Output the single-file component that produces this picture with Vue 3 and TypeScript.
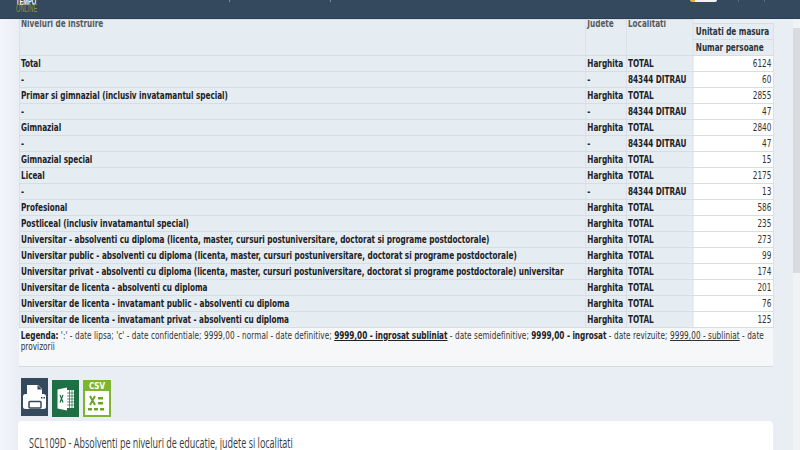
<script setup lang="ts">
interface Row { a: string; b: string; c: string; v: string }
const H = 'Harghita'
const T = 'TOTAL'
const D = '84344 DITRAU'
const rows: Row[] = [
  { a: 'Total', b: H, c: T, v: '6124' },
  { a: '-', b: '-', c: D, v: '60' },
  { a: 'Primar si gimnazial (inclusiv invatamantul special)', b: H, c: T, v: '2855' },
  { a: '-', b: '-', c: D, v: '47' },
  { a: 'Gimnazial', b: H, c: T, v: '2840' },
  { a: '-', b: '-', c: D, v: '47' },
  { a: 'Gimnazial special', b: H, c: T, v: '15' },
  { a: 'Liceal', b: H, c: T, v: '2175' },
  { a: '-', b: '-', c: D, v: '13' },
  { a: 'Profesional', b: H, c: T, v: '586' },
  { a: 'Postliceal (inclusiv invatamantul special)', b: H, c: T, v: '235' },
  { a: 'Universitar - absolventi cu diploma (licenta, master, cursuri postuniversitare, doctorat si programe postdoctorale)', b: H, c: T, v: '273' },
  { a: 'Universitar public - absolventi cu diploma (licenta, master, cursuri postuniversitare, doctorat si programe postdoctorale)', b: H, c: T, v: '99' },
  { a: 'Universitar privat - absolventi cu diploma (licenta, master, cursuri postuniversitare, doctorat si programe postdoctorale) universitar', b: H, c: T, v: '174' },
  { a: 'Universitar de licenta - absolventi cu diploma', b: H, c: T, v: '201' },
  { a: 'Universitar de licenta - invatamant public - absolventi cu diploma', b: H, c: T, v: '76' },
  { a: 'Universitar de licenta - invatamant privat - absolventi cu diploma', b: H, c: T, v: '125' },
]
</script>

<template>
  <div class="page">
    <header class="topbar">
      <div class="logo"><span class="l1">TEMPO</span><span class="l2">ONLINE</span></div>
      <span class="tick t1"></span>
      <span class="tick t2"></span>
      <span class="pill"></span>
      <span class="tick t3"></span>
      <span class="tick t4"></span>
    </header>
    <main class="content">
      <div class="sheet">
        <table class="data">
          <colgroup>
            <col class="c1" /><col class="c2" /><col class="c3" /><col class="c4" />
          </colgroup>
          <thead>
            <tr class="gap">
              <th rowspan="3" class="top">Niveluri de instruire</th>
              <th rowspan="3" class="top">Judete</th>
              <th rowspan="3" class="top">Localitati</th>
              <td class="blank"></td>
            </tr>
            <tr><th class="um">Unitati de masura</th></tr>
            <tr><th class="um">Numar persoane</th></tr>
          </thead>
          <tbody>
            <tr v-for="(r, i) in rows" :key="i">
              <th>{{ r.a }}</th>
              <th>{{ r.b }}</th>
              <th>{{ r.c }}</th>
              <td>{{ r.v }}</td>
            </tr>
          </tbody>
        </table>
        <p class="legend">
          <b>Legenda:</b> ':' - date lipsa; 'c' - date confidentiale; 9999,00 - normal - date definitive;
          <b><u>9999,00 - ingrosat subliniat</u></b> - date semidefinitive; <b>9999,00 - ingrosat</b> - date revizuite;
          <u>9999,00 - subliniat</u> - date provizorii
        </p>
      </div>
      <div class="tools">
        <svg class="ic print" width="27" height="38" viewBox="0 0 27 38">
          <rect width="27" height="38" fill="#34495e" />
          <path d="M6 7h11l4 4v6H6z" fill="#fff" />
          <path d="M16.500 7v4.500H21z" fill="#34495e" />
          <path d="M4.500 16h18a2.500 2.500 0 0 1 2.500 2.500v10a2.500 2.500 0 0 1-2.500 2.500h-18A2.500 2.500 0 0 1 2 28.500v-10A2.500 2.500 0 0 1 4.500 16z" fill="#fff" />
          <rect x="8" y="23.500" width="12" height="6.500" rx="1" fill="#fff" stroke="#34495e" stroke-width="1.500" />
          <rect x="20" y="19" width="1.500" height="1.500" fill="#34495e" />
          <rect x="22.500" y="19" width="1.500" height="1.500" fill="#34495e" />
        </svg>
        <svg class="ic" width="27" height="37" viewBox="0 0 27 37">
          <rect width="27" height="37" fill="#1e6f43" />
          <path d="M5.500 9.500L15 7.500v23l-9.500-2z" fill="#fff" />
          <rect x="15" y="10" width="7" height="18" fill="#fff" />
          <path d="M17.500 10v18M20 10v18M15 13h7M15 16h7M15 19h7M15 22h7M15 25h7" stroke="#1e6f43" stroke-width=".7" />
          <path d="M8 15l3 7.500M11 15l-3 7.500" stroke="#1e6f43" stroke-width="1.200" />
        </svg>
        <svg class="ic" width="28" height="37" viewBox="0 0 28 37">
          <rect width="28" height="37" fill="#7eb52f" />
          <rect x="2" y="11" width="24" height="24" fill="#fff" />
          <text x="14" y="8.500" class="csv">CSV</text>
          <path d="M7 16l5 9M12 16l-5 9" stroke="#6aa624" stroke-width="2" />
          <path d="M15 17h5v2.500h-5zM15 22h5v2.500h-5zM5 28h4v2.500H5zM11 28h4v2.500h-4zM17 28h4v2.500h-4z" fill="#6aa624" />
        </svg>
      </div>
      <section class="card">
        <h2>SCL109D - Absolventi pe niveluri de educatie, judete si localitati</h2>
      </section>
    </main>
    <div class="scroll"><div class="thumb"></div></div>
  </div>
</template>

<style>
html, body { margin: 0; height: 100%; overflow: hidden; }
</style>

<style scoped>
.page {
  position: relative;
  width: 800px;
  height: 450px;
  overflow: hidden;
  background: linear-gradient(90deg, #f2f5f9 0, #e9edf4 22px);
  font-family: "DejaVu Sans Condensed", "DejaVu Sans", sans-serif;
  color: #212529;
}
.topbar {
  position: relative;
  height: 19px;
  background: #34495e;
  border-bottom: 1px solid #2c3f52;
  box-sizing: border-box;
  overflow: hidden;
}
.logo {
  position: absolute;
  left: 16px;
  top: -1px;
  display: flex;
  flex-direction: column;
  font-family: "Liberation Sans", sans-serif;
  transform: scaleX(.57);
  transform-origin: 0 0;
}
.l1 { color: #fff; font-size: 10px; line-height: 5px; font-weight: 700; }
.l2 { color: #8b8f3c; font-size: 10px; line-height: 10px; }
.tick { position: absolute; top: 0; width: 1px; height: 2px; background: #7f8e9e; }
.t1 { left: 229px; }
.t2 { left: 330px; }
.t3 { left: 738px; background: #5c6f82; }
.t4 { left: 764px; background: #5c6f82; }
.pill {
  position: absolute;
  top: 0;
  left: 690px;
  width: 27px;
  height: 2px;
  box-sizing: border-box;
  border-radius: 0 0 3px 3px;
  background: #f2f2f2;
  border-left: 5px solid #e0b53a;
}
.content { padding: 0 27px 0 19px; }
.sheet {
  width: 928px;
  transform: scaleX(.8125);
  transform-origin: 0 0;
}
.data {
  width: 928px;
  table-layout: fixed;
  border-collapse: collapse;
  font-size: 10px;
  line-height: 12px;
}
.c1 { width: 697px; }
.c2 { width: 50px; }
.c3 { width: 82px; }
.c4 { width: 99px; }
th, td {
  height: 16px;
  padding: 0 2px 0 1.500px;
  box-sizing: border-box;
  border: 1px solid #d6dde3;
  white-space: nowrap;
  overflow: hidden;
}
th { background: #e6edf2; text-align: left; font-weight: 700; color: #1c2226; letter-spacing: -.04px; }
.gap { height: 4px; }
.blank { height: 4px; background: #eaeff4; border: 0; padding: 0; }
thead .top { vertical-align: top; padding-top: 0; color: #555b61; line-height: 7px; }
thead .um { color: #2c3338; padding-left: 3px; }
td { background: #fff; text-align: right; color: #333; }
.legend {
  margin: 0;
  height: 39px;
  box-sizing: border-box;
  padding: 2px 2px;
  font-size: 10px;
  line-height: 11px;
  letter-spacing: .07px;
  background: #f6f7f9;
  border-bottom: 1px solid #d8dce2;
  color: #333;
}
.legend b { color: #1c2226; letter-spacing: -.04px; }
.tools {
  display: flex;
  gap: 4px;
  align-items: flex-end;
  height: 39px;
  margin: 11px 0 0 2px;
}
.ic { display: block; }
.print { margin-bottom: 1px; }
.csv {
  font: 700 8px "DejaVu Sans Condensed", sans-serif;
  fill: #fff;
  text-anchor: middle;
}
.card {
  margin: 4px 0 0 -1px;
  width: 755px;
  height: 60px;
  background: #fff;
  border-radius: 4px;
  padding: 14px 11px;
  box-sizing: border-box;
}
h2 {
  margin: 0;
  font: 400 14px/15px "Open Sans", sans-serif;
  color: #343a40;
  white-space: nowrap;
  transform: scaleX(.643);
  transform-origin: 0 0;
}
.scroll {
  position: absolute;
  top: 19px;
  right: 0;
  bottom: 0;
  width: 7px;
  background: #f1f2f4;
}
.thumb { height: 245px; margin-top: 9px; background: #d9dbde; }
</style>
